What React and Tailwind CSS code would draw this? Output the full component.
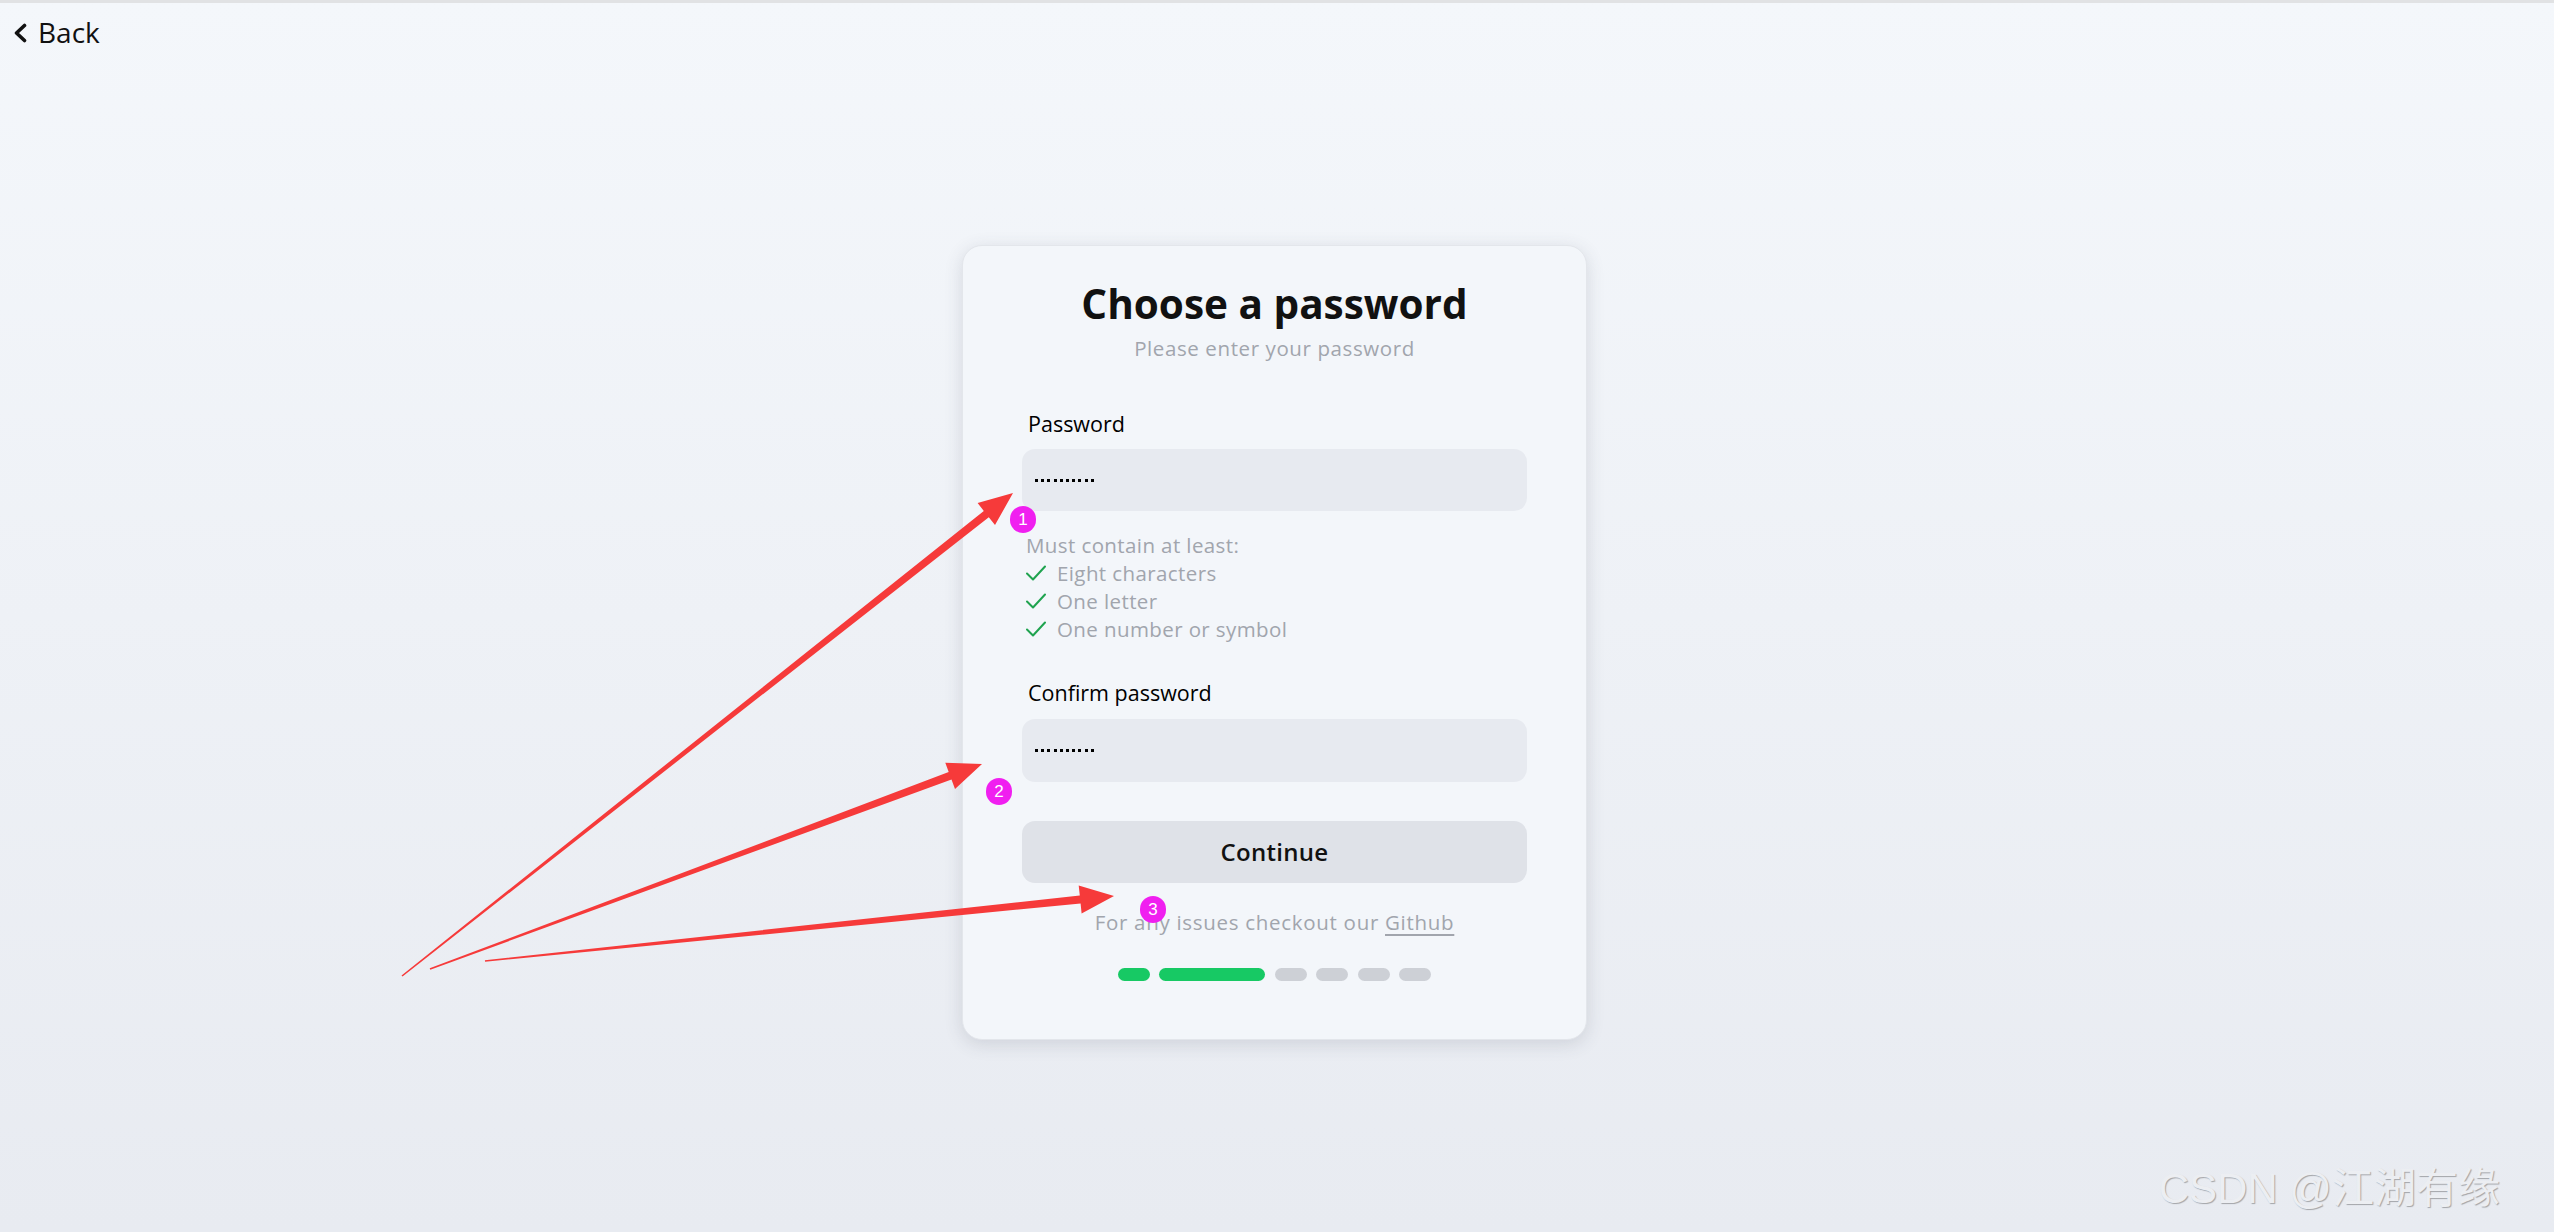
import React from 'react';

// ============================================================================
// ANNOTATION HELPERS (red arrows + numbered badges drawn over the page)
// ============================================================================

const arrowPoints = (x0, y0, x1, y1, w0 = 1.5, w1 = 8, hl = 34, hw = 14) => {
  const dx = x1 - x0;
  const dy = y1 - y0;
  const len = Math.hypot(dx, dy);
  const ux = dx / len;
  const uy = dy / len;
  const nx = -uy;
  const ny = ux;
  const bx = x1 - ux * hl;
  const by = y1 - uy * hl;
  const pts = [
    [x0 + (nx * w0) / 2, y0 + (ny * w0) / 2],
    [bx + (nx * w1) / 2, by + (ny * w1) / 2],
    [bx + nx * hw, by + ny * hw],
    [x1, y1],
    [bx - nx * hw, by - ny * hw],
    [bx - (nx * w1) / 2, by - (ny * w1) / 2],
    [x0 - (nx * w0) / 2, y0 - (ny * w0) / 2],
  ];
  return pts.map((p) => p.map((v) => v.toFixed(1)).join(',')).join(' ');
};

const ARROWS = [
  [402, 973, 1013, 490],
  [430, 966, 982, 761],
  [485, 958, 1114, 893],
];

const BADGES = [
  { n: '1', x: 1023, y: 516 },
  { n: '2', x: 999, y: 788 },
  { n: '3', x: 1153, y: 906 },
];

const Annotations = () => (
  <div className="absolute inset-0 pointer-events-none">
    <svg className="absolute inset-0" width="2554" height="1232">
      {ARROWS.map((a, i) => (
        <polygon key={i} points={arrowPoints(...a)} fill="#f63a3a" />
      ))}
    </svg>
    {BADGES.map((b) => (
      <div
        key={b.n}
        className="absolute w-[26px] h-[27px] rounded-full bg-[#f01ff0] text-white text-[17px] leading-[27px] text-center font-['Liberation_Sans',sans-serif]"
        style={{ left: b.x - 13, top: b.y - 13 }}
      >
        {b.n}
      </div>
    ))}
  </div>
);

// ============================================================================
// SMALL PIECES
// ============================================================================

const Dots = () => (
  <div className="flex gap-[3.2px]">
    {Array.from({ length: 10 }).map((_, i) => (
      <span key={i} className="w-[3px] h-[3px] bg-black" />
    ))}
  </div>
);

const Check = () => (
  <svg width="20" height="16" viewBox="0 0 20 16" className="shrink-0">
    <path d="M1 8.5 L7 14.5 L19 1.5" fill="none" stroke="#1fa34f" strokeWidth="2" strokeLinecap="round" strokeLinejoin="round" />
  </svg>
);

const Rule = ({ children }) => (
  <div className="flex items-center h-[28px]">
    <Check />
    <span className="ml-[11px]">{children}</span>
  </div>
);

const bars = ['w-[32px] bg-[#17c964]', 'w-[106px] bg-[#17c964]', 'w-[32px] bg-[#cdd0d6]', 'w-[32px] bg-[#cdd0d6]', 'w-[32px] bg-[#cdd0d6]', 'w-[32px] bg-[#cdd0d6]'];

// ============================================================================
// APP
// ============================================================================

const App = () => {
  return (
    <div className="relative w-full h-[1232px] overflow-hidden border-t-[3px] border-[#e1e2e4] bg-gradient-to-b from-[#f4f7fb] to-[#e8ebf1] font-['Open_Sans',sans-serif]">
      {/* BACK */}
      <div className="pt-[12px] pl-[12px]">
        <button className="flex items-center h-[35px] text-[28px] leading-[35px] text-[#111]">
          <svg width="16" height="20" viewBox="0 0 16 20">
            <path d="M12.5 2.5 L4.5 10 L12.5 17.5" fill="none" stroke="#111" strokeWidth="3.6" strokeLinecap="round" strokeLinejoin="round" />
          </svg>
          <span className="ml-[10px]">Back</span>
        </button>
      </div>

      {/* CARD */}
      <div className="flex justify-center pr-[5px] mt-[195px]">
        <div className="w-[625px] rounded-[20px] bg-[#f3f6fa] border border-[#e3e6eb] shadow-[0_4px_18px_rgba(60,70,90,0.16)] px-[59px] pt-[33px] pb-[58px] flex flex-col">
          <h1 className="text-[40.5px] leading-[49px] font-bold text-center text-[#111]">Choose a password</h1>
          <p className="mt-[7px] text-[20.5px] leading-[26px] tracking-[0.6px] text-center text-[#a1a5ad]">Please enter your password</p>

          <label className="mt-[49px] ml-[6px] text-[21.5px] leading-[28px] font-medium text-black">Password</label>
          <div className="mt-[11px] h-[62px] rounded-[13px] bg-[#e7eaf0] px-[13px] flex items-center">
            <Dots />
          </div>

          <div className="mt-[20px] ml-[4px] text-[20.5px] leading-[28px] tracking-[0.4px] text-[#a1a5ad]">
            <div>Must contain at least:</div>
            <Rule>Eight characters</Rule>
            <Rule>One letter</Rule>
            <Rule>One number or symbol</Rule>
          </div>

          <label className="mt-[36px] ml-[6px] text-[21.5px] leading-[28px] font-medium text-black">Confirm password</label>
          <div className="mt-[12px] h-[63px] rounded-[13px] bg-[#e7eaf0] px-[13px] flex items-center">
            <Dots />
          </div>

          <button className="mt-[39px] h-[62px] rounded-[13px] bg-[#dfe2e8] text-[24px] tracking-[0.3px] font-semibold text-[#111]">Continue</button>

          <p className="mt-[26px] text-[20.5px] leading-[26px] tracking-[0.7px] text-center text-[#a1a5ad]">
            For any issues checkout our <span className="underline underline-offset-4">Github</span>
          </p>

          <div className="mt-[33px] flex justify-center gap-[9.5px]">
            {bars.map((c, i) => (
              <span key={i} className={`h-[13px] rounded-full ${c}`} />
            ))}
          </div>
        </div>
      </div>

      {/* WATERMARK */}
      <div className="absolute right-[54px] bottom-[21px] text-[42px] leading-[44px] text-[#eceef2] [text-shadow:1px_1px_1px_rgba(0,0,0,0.3)] font-['Liberation_Sans','Noto_Sans_CJK_SC',sans-serif]">
        CSDN @江湖有缘
      </div>

      <Annotations />
    </div>
  );
};

export default App;
